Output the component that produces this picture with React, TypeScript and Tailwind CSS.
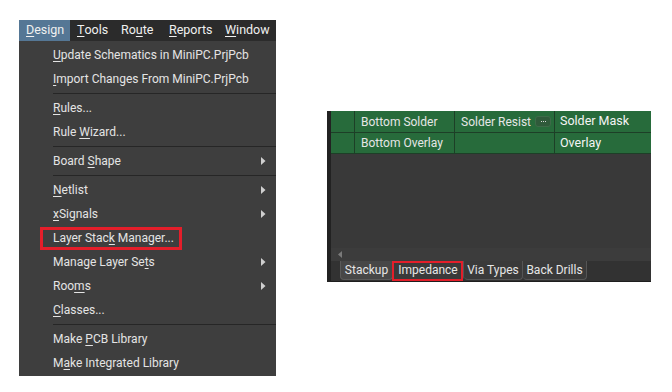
import React from "react";

type MenuEntry =
  | { kind: "item"; pre: string; key: string; post: string; sub?: boolean; marked?: boolean }
  | { kind: "sep" };

const entries: MenuEntry[] = [
  { kind: "item", pre: "", key: "U", post: "pdate Schematics in MiniPC.PrjPcb" },
  { kind: "item", pre: "", key: "I", post: "mport Changes From MiniPC.PrjPcb" },
  { kind: "sep" },
  { kind: "item", pre: "", key: "R", post: "ules..." },
  { kind: "item", pre: "Rule ", key: "W", post: "izard..." },
  { kind: "sep" },
  { kind: "item", pre: "Board ", key: "S", post: "hape", sub: true },
  { kind: "sep" },
  { kind: "item", pre: "", key: "N", post: "etlist", sub: true },
  { kind: "item", pre: "", key: "x", post: "Signals", sub: true },
  { kind: "item", pre: "Layer Stac", key: "k", post: " Manager...", marked: true },
  { kind: "item", pre: "Manage Layer Se", key: "t", post: "s", sub: true },
  { kind: "item", pre: "Roo", key: "m", post: "s", sub: true },
  { kind: "item", pre: "", key: "C", post: "lasses..." },
  { kind: "sep" },
  { kind: "item", pre: "Make ", key: "P", post: "CB Library" },
  { kind: "item", pre: "M", key: "a", post: "ke Integrated Library" },
];

// menu bar titles, with the position of each title
const bar = [
  { key: "D", rest: "esign", pre: "", w: "w-[51px]" },
  { key: "T", rest: "ools", pre: "", w: "w-[44px]" },
  { key: "u", rest: "te", pre: "Ro", w: "w-[48px]" },
  { key: "R", rest: "eports", pre: "", w: "w-[56px]" },
  { key: "W", rest: "indow", pre: "", w: "w-[56px]" },
];

const Arrow = () => (
  <svg width="5" height="8" viewBox="0 0 5 8" className="mr-[10px]">
    <path d="M0 0 L4.5 4 L0 8 Z" fill="#cfcfcf" />
  </svg>
);

const DesignMenu = () => (
  <div className="ml-[19px] mt-[20px] w-[257px] flex flex-col text-[12px] leading-none">
    {/* menu bar */}
    <div className="flex h-[21px] bg-[#2b2b2b] text-[#f0f0f0] text-[12.5px]">
      {bar.map((b, i) => (
        <div
          key={i}
          className={
            (i === 0 ? "bg-[#557795] " : "") + b.w + " flex items-center pl-[7px] h-full"
          }
        >
          {b.pre}
          <span className="underline underline-offset-2">{b.key}</span>
          {b.rest}
        </div>
      ))}
    </div>

    {/* menu body */}
    <div className="flex flex-col bg-[#3e3e3e] pt-[2px] pb-[1px] text-[#e4e4e4]">
      {entries.map((e, i) =>
        e.kind === "sep" ? (
          <div key={i} className="h-[5px] flex items-center pl-[34px]">
            <div className="h-px w-full bg-[#262626]" />
          </div>
        ) : (
          <div key={i} className="relative h-[24px] flex items-center justify-between pl-[34px]">
            <span>
              {e.pre}
              <span className="underline underline-offset-2">{e.key}</span>
              {e.post}
            </span>
            {e.sub && <Arrow />}
            {e.marked && (
              <div className="absolute left-[21px] top-[1px] w-[142px] h-[23px] border-[3px] border-[#e41e2a]" />
            )}
          </div>
        )
      )}
    </div>
  </div>
);

const cell = "h-full flex items-center border-r border-[#1d3f27] pl-[6px]";

const StackPanel = () => (
  <div className="ml-[51px] mt-[111px] w-[324px] h-[171px] flex bg-[#222222] text-[12px] leading-none text-[#e6e6e6]">
    <div className="w-[4px]" />
    <div className="flex-1 flex flex-col">
      <div className="h-[22px] flex bg-[#276b3b] border-b border-[#1d3f27]">
        <div className={cell + " w-[24px]"} />
        <div className={cell + " w-[100px]"}>Bottom Solder</div>
        <div className={cell + " w-[100px] justify-between pr-[3px]"}>
          <span>Solder Resist</span>
          <span className="w-[16px] h-[11px] rounded-[3px] bg-[#2f5a3a] border border-[#3d6a48] flex items-center justify-center gap-[1px]">
            <span className="w-[1px] h-[1px] bg-[#d8d8d8]" />
            <span className="w-[1px] h-[1px] bg-[#d8d8d8]" />
            <span className="w-[1px] h-[1px] bg-[#d8d8d8]" />
          </span>
        </div>
        <div className="h-full flex items-center pl-[5px] flex-1 text-[12.5px] text-[#f4f4f4]">Solder Mask</div>
      </div>
      <div className="h-[21px] flex bg-[#276b3b] border-b border-[#1d3f27]">
        <div className={cell + " w-[24px]"} />
        <div className={cell + " w-[100px]"}>Bottom Overlay</div>
        <div className={cell + " w-[100px]"} />
        <div className="h-full flex items-center pl-[5px] flex-1 text-[12.5px] text-[#f4f4f4]">Overlay</div>
      </div>
      <div className="flex-1 bg-[#393939]" />
      <div className="h-[13px] bg-[#3c3c3c] flex items-center pl-[7px]">
        <svg width="4" height="7" viewBox="0 0 4 7">
          <path d="M4 0 L0 3.5 L4 7 Z" fill="#7a7a7a" />
        </svg>
      </div>
      <div className="h-[21px] bg-[#323232] flex items-start pl-[9px] border-b border-[#1e1e1e]">
        <div className="w-[53px] h-[19px] flex items-center justify-center bg-[#474747] border border-t-0 border-[#5a5a5a] rounded-b-[4px]">
          Stackup
        </div>
        <div className="relative w-[71px] h-[19px] flex items-center justify-center bg-[#3a3a3a] border-b border-r border-[#555555] rounded-br-[4px]">
          Impedance
          <div className="absolute -left-[1px] top-[0px] w-[71px] h-[20px] border-[2px] border-[#e41e2a]" />
        </div>
        <div className="w-[59px] h-[19px] flex items-center justify-center bg-[#3a3a3a] border-b border-r border-[#555555] rounded-b-[4px]">
          Via Types
        </div>
        <div className="w-[64px] h-[19px] flex items-center justify-center bg-[#3a3a3a] border-b border-r border-[#555555] rounded-b-[4px]">
          Back Drills
        </div>
      </div>
    </div>
  </div>
);

export default function App() {
  return (
    <div
      className="w-[672px] h-[392px] bg-white flex items-start"
      style={{ fontFamily: 'Roboto, "Noto Sans", sans-serif' }}
    >
      <DesignMenu />
      <StackPanel />
    </div>
  );
}
